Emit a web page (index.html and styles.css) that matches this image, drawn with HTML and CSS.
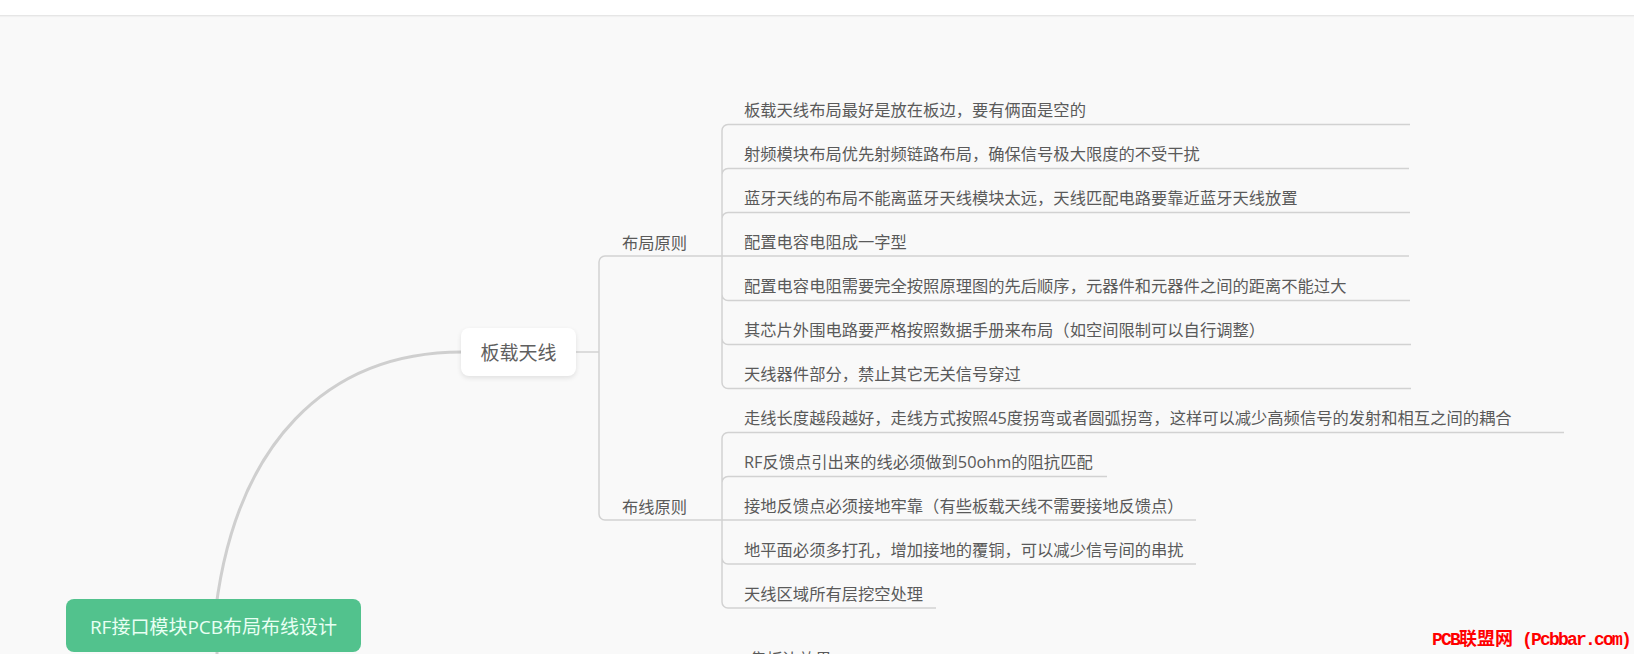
FILE: index.html
```html
<!DOCTYPE html>
<html lang="zh-CN">
<head>
<meta charset="utf-8">
<title>RF接口模块PCB布局布线设计</title>
<link rel="stylesheet" href="styles.css">
</head>
<body>
<header class="topbar"></header>
<main class="canvas">
  <svg class="links" width="1634" height="638" viewBox="0 16 1634 638" fill="none">
    <path class="main-link" d="M217 670V640M214 625C232 440 330 352 462 352"/>
    <path class="link" d="M576 352H599M599 352V262a6 6 0 0 1 6-6H722M599 352V514a6 6 0 0 0 6 6H722"/>
    <path class="link" d="M722 256V130.500a6 6 0 0 1 6-6H1410M722 256V174.500a6 6 0 0 1 6-6H1409M722 256V218.500a6 6 0 0 1 6-6H1410M722 256H1409M722 256V294.500a6 6 0 0 0 6 6H1410M722 256V338.500a6 6 0 0 0 6 6H1411M722 256V382.500a6 6 0 0 0 6 6H1411"/>
    <path class="link" d="M722 520V438.500a6 6 0 0 1 6-6H1564M722 520V482.500a6 6 0 0 1 6-6H1107M722 520H1196M722 520V558a6 6 0 0 0 6 6H1196M722 520V602a6 6 0 0 0 6 6H936"/>
  </svg>
  <div class="node root">RF接口模块PCB布局布线设计</div>
  <div class="node branch">板载天线</div>
  <div class="label label-layout">布局原则</div>
  <div class="label label-wiring">布线原则</div>
  <ul class="leaves">
    <li>板载天线布局最好是放在板边，要有俩面是空的</li>
    <li>射频模块布局优先射频链路布局，确保信号极大限度的不受干扰</li>
    <li>蓝牙天线的布局不能离蓝牙天线模块太远，天线匹配电路要靠近蓝牙天线放置</li>
    <li>配置电容电阻成一字型</li>
    <li>配置电容电阻需要完全按照原理图的先后顺序，元器件和元器件之间的距离不能过大</li>
    <li>其芯片外围电路要严格按照数据手册来布局（如空间限制可以自行调整）</li>
    <li>天线器件部分，禁止其它无关信号穿过</li>
    <li>走线长度越段越好，走线方式按照45度拐弯或者圆弧拐弯，这样可以减少高频信号的发射和相互之间的耦合</li>
    <li>RF反馈点引出来的线必须做到50ohm的阻抗匹配</li>
    <li>接地反馈点必须接地牢靠（有些板载天线不需要接地反馈点）</li>
    <li>地平面必须多打孔，增加接地的覆铜，可以减少信号间的串扰</li>
    <li>天线区域所有层挖空处理</li>
  </ul>
  <div class="label label-next">集板边效果</div>
  <div class="watermark">PCB<span class="wm-cjk">联盟网</span> (Pcbbar.com)</div>
</main>
</body>
</html>
```

FILE: styles.css
```css
* { box-sizing: border-box; }
html, body { margin: 0; padding: 0; height: 654px; overflow: hidden; }
body { font-family: "Open Sans", "Noto Sans CJK SC", sans-serif; background: #f9f9f9; color: #5a5a5a; }
.topbar { height: 16px; background: #fff; border-bottom: 1px solid #e6e6e6; box-shadow: 0 1px 1px rgba(0,0,0,.03); }
.canvas { position: relative; width: 1634px; height: 638px; overflow: hidden; }
.links { position: absolute; left: 0; top: 0; }
.main-link { stroke: #cfcfcf; stroke-width: 3; }
.link { stroke: #d2d2d2; stroke-width: 1.500; }
.node { position: absolute; display: flex; align-items: center; justify-content: center; white-space: nowrap; }
.root { left: 66px; top: 583px; width: 295px; height: 53px; border-radius: 8px; background: #52c28d; color: #e8fff3; font-size: 19px; }
.branch { left: 461px; top: 312px; width: 115px; height: 48px; border-radius: 8px; background: #fff; font-size: 19px; color: #5f5f5f; box-shadow: 0 2px 5px rgba(0,0,0,.1); }
.label { position: absolute; font-size: 16.300px; line-height: 24px; white-space: nowrap; }
.label-layout { left: 622px; top: 215px; }
.label-wiring { left: 622px; top: 479px; }
.label-next { left: 750px; top: 631px; }
.leaves { position: absolute; left: 744px; top: 72px; margin: 0; padding: 0; list-style: none; display: flex; flex-direction: column; }
.leaves li { height: 44px; font-size: 16.300px; line-height: 44px; white-space: nowrap; }
.watermark { position: absolute; right: 4px; bottom: 3px; color: #f00; font-family: "Liberation Mono", "Noto Sans CJK SC", monospace; font-weight: 700; font-size: 18px; letter-spacing: -1.800px; line-height: 22px; white-space: pre; }
.wm-cjk { font-family: "Noto Sans CJK SC", sans-serif; font-size: 18px; letter-spacing: 0; }
```
